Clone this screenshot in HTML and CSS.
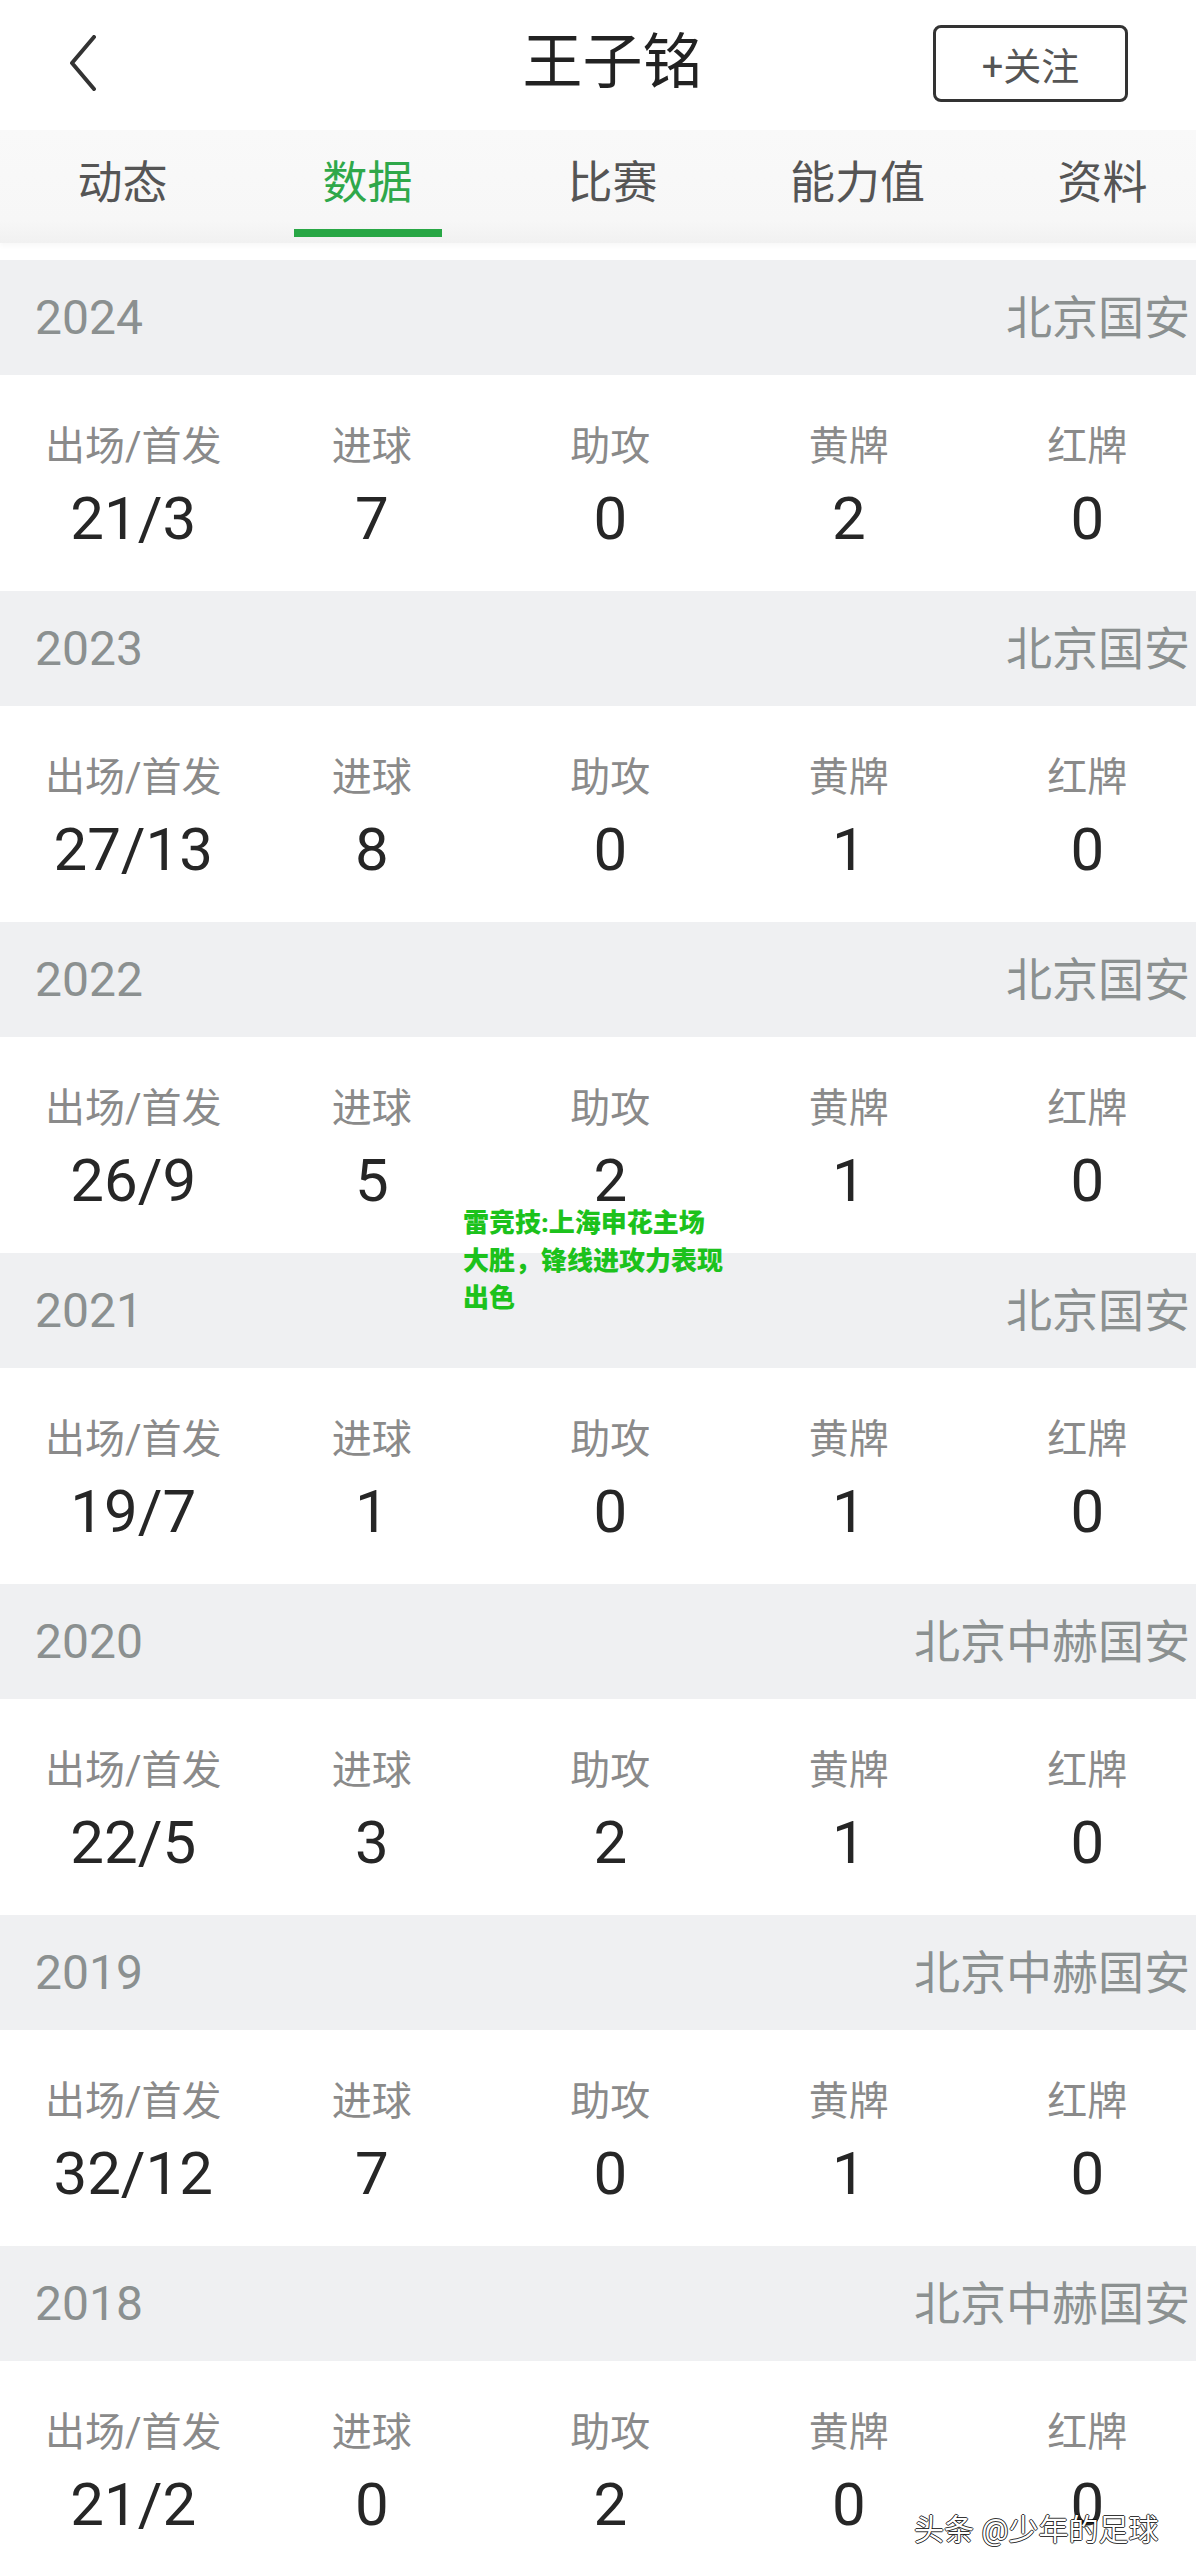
FILE: index.html
```html
<!DOCTYPE html>
<html lang="zh-CN">
<head>
    <meta charset="UTF-8">
    <meta name="viewport" content="width=device-width, initial-scale=1.0">
    <title>王子铭 - 数据</title>
    <link rel="stylesheet" href="styles.css">
</head>
<body>
<div class="page">

    <header class="topbar">
        <a class="back" href="#">
            <svg width="30" height="56" viewBox="0 0 30 56">
                <path d="M26 2 L4 28 L26 54" fill="none" stroke="#333" stroke-width="4" stroke-linecap="round" stroke-linejoin="round"/>
            </svg>
        </a>
        <h1 class="title">王子铭</h1>
        <button class="follow">+关注</button>
    </header>

    <nav class="tabs">
        <div class="tab">动态</div>
        <div class="tab active">数据</div>
        <div class="tab">比赛</div>
        <div class="tab">能力值</div>
        <div class="tab">资料</div>
    </nav>

    <div class="seasons">
        <section class="season">
            <div class="season-head"><span class="year">2024</span><span class="team">北京国安</span></div>
            <div class="stats">
                <div class="stat"><span class="label">出场/首发</span><span class="value">21/3</span></div>
                <div class="stat"><span class="label">进球</span><span class="value">7</span></div>
                <div class="stat"><span class="label">助攻</span><span class="value">0</span></div>
                <div class="stat"><span class="label">黄牌</span><span class="value">2</span></div>
                <div class="stat"><span class="label">红牌</span><span class="value">0</span></div>
            </div>
        </section>
        <section class="season">
            <div class="season-head"><span class="year">2023</span><span class="team">北京国安</span></div>
            <div class="stats">
                <div class="stat"><span class="label">出场/首发</span><span class="value">27/13</span></div>
                <div class="stat"><span class="label">进球</span><span class="value">8</span></div>
                <div class="stat"><span class="label">助攻</span><span class="value">0</span></div>
                <div class="stat"><span class="label">黄牌</span><span class="value">1</span></div>
                <div class="stat"><span class="label">红牌</span><span class="value">0</span></div>
            </div>
        </section>
        <section class="season">
            <div class="season-head"><span class="year">2022</span><span class="team">北京国安</span></div>
            <div class="stats">
                <div class="stat"><span class="label">出场/首发</span><span class="value">26/9</span></div>
                <div class="stat"><span class="label">进球</span><span class="value">5</span></div>
                <div class="stat"><span class="label">助攻</span><span class="value">2</span></div>
                <div class="stat"><span class="label">黄牌</span><span class="value">1</span></div>
                <div class="stat"><span class="label">红牌</span><span class="value">0</span></div>
            </div>
        </section>
        <section class="season">
            <div class="season-head"><span class="year">2021</span><span class="team">北京国安</span></div>
            <div class="stats">
                <div class="stat"><span class="label">出场/首发</span><span class="value">19/7</span></div>
                <div class="stat"><span class="label">进球</span><span class="value">1</span></div>
                <div class="stat"><span class="label">助攻</span><span class="value">0</span></div>
                <div class="stat"><span class="label">黄牌</span><span class="value">1</span></div>
                <div class="stat"><span class="label">红牌</span><span class="value">0</span></div>
            </div>
        </section>
        <section class="season">
            <div class="season-head"><span class="year">2020</span><span class="team">北京中赫国安</span></div>
            <div class="stats">
                <div class="stat"><span class="label">出场/首发</span><span class="value">22/5</span></div>
                <div class="stat"><span class="label">进球</span><span class="value">3</span></div>
                <div class="stat"><span class="label">助攻</span><span class="value">2</span></div>
                <div class="stat"><span class="label">黄牌</span><span class="value">1</span></div>
                <div class="stat"><span class="label">红牌</span><span class="value">0</span></div>
            </div>
        </section>
        <section class="season">
            <div class="season-head"><span class="year">2019</span><span class="team">北京中赫国安</span></div>
            <div class="stats">
                <div class="stat"><span class="label">出场/首发</span><span class="value">32/12</span></div>
                <div class="stat"><span class="label">进球</span><span class="value">7</span></div>
                <div class="stat"><span class="label">助攻</span><span class="value">0</span></div>
                <div class="stat"><span class="label">黄牌</span><span class="value">1</span></div>
                <div class="stat"><span class="label">红牌</span><span class="value">0</span></div>
            </div>
        </section>
        <section class="season">
            <div class="season-head"><span class="year">2018</span><span class="team">北京中赫国安</span></div>
            <div class="stats">
                <div class="stat"><span class="label">出场/首发</span><span class="value">21/2</span></div>
                <div class="stat"><span class="label">进球</span><span class="value">0</span></div>
                <div class="stat"><span class="label">助攻</span><span class="value">2</span></div>
                <div class="stat"><span class="label">黄牌</span><span class="value">0</span></div>
                <div class="stat"><span class="label">红牌</span><span class="value">0</span></div>
            </div>
        </section>
    </div>

    <div class="promo">雷竞技:上海申花主场大胜，锋线进攻力表现出色</div>
    <div class="watermark">头条 @少年的足球</div>

</div>
</body>
</html>
```

FILE: styles.css
```css
body {
    margin: 0;
    background: #fff;
    overflow: hidden;
    font-family: Roboto, "Noto Sans CJK SC", sans-serif;
}

.page {
    position: relative;
    width: 1225px;
}

/* top bar */
.topbar {
    height: 130px;
    box-sizing: border-box;
    padding: 0 68px 4px 68px;
    display: grid;
    grid-template-columns: 1fr auto 1fr;
    align-items: center;
    background: #fff;
}
.back {
    display: flex;
    justify-self: start;
}
.title {
    margin: 0;
    font-size: 60px;
    font-weight: normal;
    line-height: 70px;
    color: #222;
}
.follow {
    justify-self: end;
    margin-right: 29px;
    width: 195px;
    height: 77px;
    border: 3px solid #333;
    border-radius: 8px;
    background: #fff;
    color: #555;
    font-family: Roboto, "Noto Sans CJK SC", sans-serif;
    font-size: 38px;
    padding: 0;
}

/* tabs */
.tabs {
    height: 113px;
    display: grid;
    grid-template-columns: repeat(5, 245px);
    align-items: start;
    background: linear-gradient(#f9f9f9, #f7f7f7 80%, #f1f1f1);
    box-shadow: 0 3px 5px rgba(0, 0, 0, 0.03);
    margin-bottom: 17px;
}
.tab {
    display: flex;
    flex-direction: column;
    align-items: center;
    padding-top: 26px;
    font-size: 45px;
    line-height: 56px;
    color: #555;
}
.tab.active {
    color: #2fa84a;
}
.tab.active::after {
    content: "";
    width: 148px;
    height: 8px;
    margin-top: 17px;
    background: #28a745;
}

/* seasons */
.season-head {
    height: 115px;
    box-sizing: border-box;
    padding: 0 35px;
    display: flex;
    align-items: center;
    justify-content: space-between;
    background: #eff0f2;
    color: #8b9090;
}
.year {
    font-size: 48px;
    line-height: 56px;
}
.team {
    font-size: 46px;
    line-height: 60px;
}

.stats {
    height: 216px;
    box-sizing: border-box;
    padding: 47px 0 0 14px;
    display: grid;
    grid-template-columns: repeat(5, 238.5px);
    background: #fff;
}
.stat {
    display: flex;
    flex-direction: column;
    align-items: center;
    gap: 17px;
}
.label {
    font-size: 40px;
    line-height: 50px;
    color: #8a8a8a;
}
.value {
    font-size: 60px;
    line-height: 60px;
    color: #262626;
}

/* overlays */
.promo {
    position: absolute;
    left: 463px;
    top: 1205px;
    width: 264px;
    font-size: 26px;
    line-height: 37.5px;
    font-weight: 900;
    color: #1cc21c;
}
.watermark {
    position: absolute;
    left: 914px;
    top: 2511px;
    font-size: 30px;
    line-height: 38px;
    color: #fff;
    white-space: nowrap;
    text-shadow: -1px 0 rgba(0,0,0,0.8), 1px 0 rgba(0,0,0,0.8), 0 -1px rgba(0,0,0,0.8), 0 1px rgba(0,0,0,0.8);
}
```
